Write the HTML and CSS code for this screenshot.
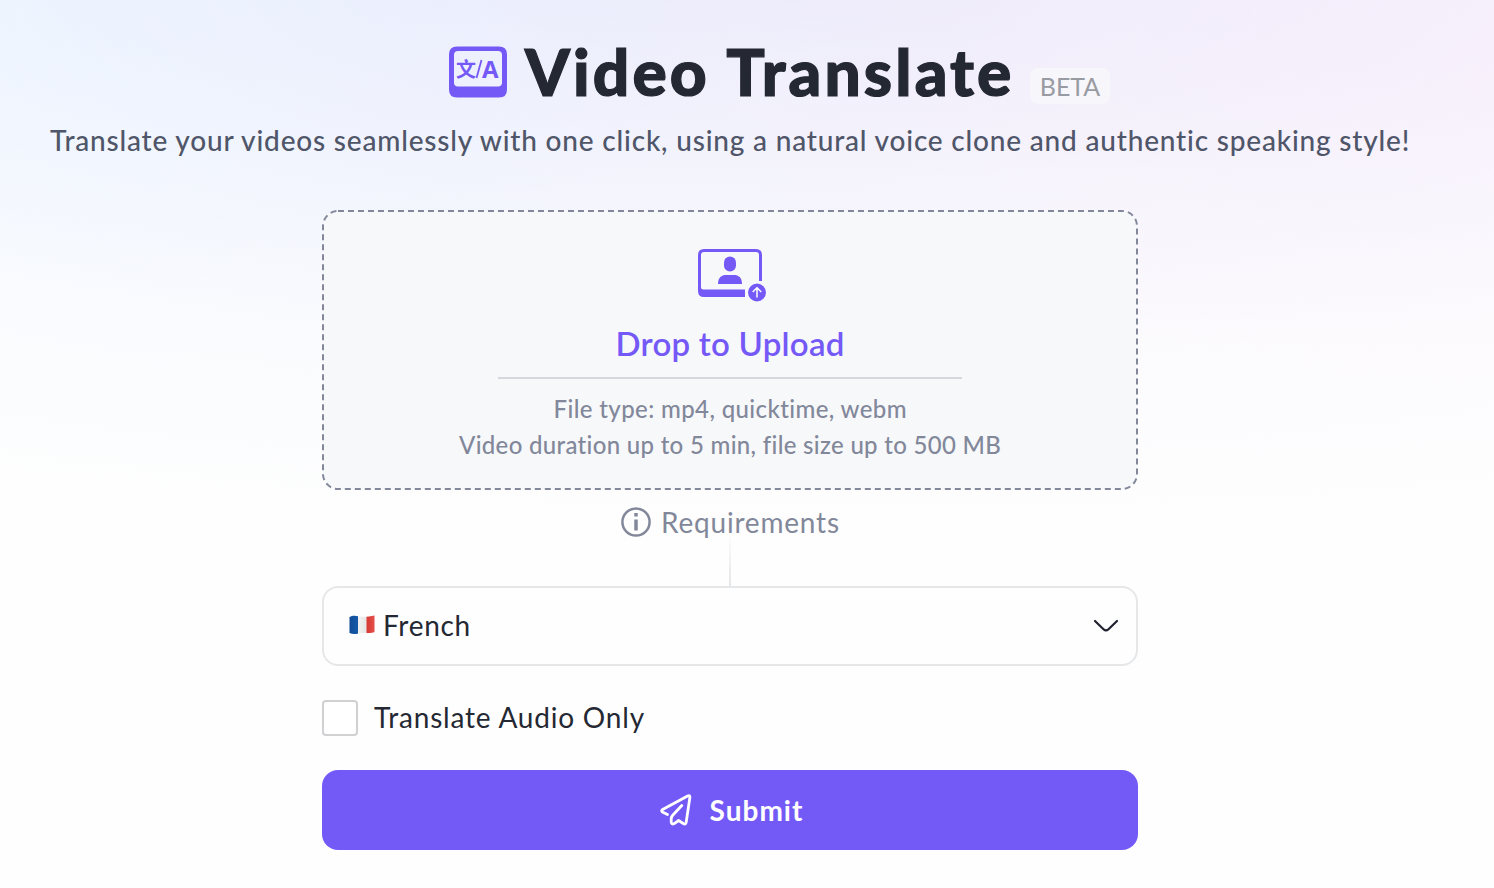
FILE: index.html
```html
<!DOCTYPE html>
<html lang="en">
<head>
<meta charset="utf-8">
<title>Video Translate</title>
<link rel="stylesheet" href="styles.css">
</head>
<body>
<main class="page">
  <header class="hero">
    <div class="hero-title">
      <svg class="hero-icon" width="58" height="52" viewBox="0 0 58 52">
        <path fill="#7559f7" fill-rule="evenodd" d="M8 0.5H50Q58 0.5 58 8.500V43.500Q58 51.500 50 51.500H8Q0 51.500 0 43.500V8.500Q0 0.500 8 0.500ZM9 5Q5 5 5 9V36.500Q5 40.500 9 40.500H49Q53 40.500 53 36.500V9Q53 5 49 5Z"/>
        <g fill="#7559f7">
          <text class="glyph-han" x="7" y="30.500">文</text>
          <text class="glyph-latin" x="33" y="32">A</text>
        </g>
        <path d="M27.500 32 32.500 14" stroke="#7559f7" stroke-width="1.800"/>
      </svg>
      <h1 class="title">Video Translate</h1>
      <span class="badge">BETA</span>
    </div>
    <p class="subtitle">Translate your videos seamlessly with one click, using a natural voice clone and authentic speaking style!</p>
  </header>
  <section class="form">
    <div class="dropzone">
      <svg class="dash" width="816" height="280"><rect x="1" y="1" width="814" height="278" rx="15" fill="#f7f8fa" stroke="#82889a" stroke-width="2" stroke-dasharray="6 4"/></svg>
      <svg class="upload-icon" width="70" height="54" viewBox="0 0 70 54">
        <path fill="#7559f7" fill-rule="evenodd" d="M6 0H58Q64 0 64 6V32H61V6Q61 3 58 3H6Q3 3 3 6V38Q3 40.500 5.500 40.500H47V48H6Q0 48 0 42V6Q0 0 6 0Z"/>
        <rect x="26" y="7.500" width="12" height="15" rx="6" fill="#7559f7"/>
        <path d="M20 35C20 28.500 23.500 26 28 26H36C40.500 26 44 28.500 44 35Z" fill="#7559f7"/>
        <circle cx="59" cy="43.500" r="9" fill="#7559f7"/>
        <path d="M59 48.500V39M54.700 43 59 38.800 63.300 43" fill="none" stroke="#fff" stroke-width="1.500"/>
      </svg>
      <div class="drop-title">Drop to Upload</div>
      <hr class="rule">
      <p class="hint hint-type">File type: mp4, quicktime, webm</p>
      <p class="hint hint-size">Video duration up to 5 min, file size up to 500 MB</p>
    </div>
    <div class="requirements">
      <svg width="30" height="30" viewBox="0 0 30 30"><circle cx="15" cy="15" r="13.600" fill="none" stroke="#82889a" stroke-width="2.500"/><path d="M15 12.500V23.500M15 6V9.500" stroke="#82889a" stroke-width="3.500"/></svg>
      <span class="requirements-label">Requirements</span>
      <i class="connector"></i>
    </div>
    <div class="select">
      <svg class="flag" width="26" height="20" viewBox="0 0 26 20">
        <defs>
          <clipPath id="wave"><path d="M.5 2C5-.4 9 1.500 13 1.800S21 1.500 25.500.5V17C21 19 17 17.500 13 18S5 20 .5 18Z"/></clipPath>
          <linearGradient id="fold"><stop stop-color="#000" stop-opacity=".12"/><stop offset=".3" stop-color="#000" stop-opacity="0"/><stop offset=".65" stop-color="#000" stop-opacity=".06"/><stop offset="1" stop-color="#fff" stop-opacity=".12"/></linearGradient>
        </defs>
        <g clip-path="url(#wave)"><path fill="#1457a8" d="M0 0H9V20H0Z"/><path fill="#f4f4f5" d="M9 0H17.500V20H9Z"/><path fill="#e63d38" d="M17.500 0H26V20H17.500Z"/><path fill="url(#fold)" d="M0 0H26V20H0Z"/></g>
      </svg>
      <span class="select-value">French</span>
      <svg class="chevron" width="26" height="16" viewBox="0 0 26 16"><path d="M2 3 10.500 11.200Q13 13.600 15.500 11.200L24 3" fill="none" stroke="#20222f" stroke-width="2.200" stroke-linecap="round"/></svg>
    </div>
    <label class="check"><span class="box"></span><span class="check-label">Translate Audio Only</span></label>
    <button class="submit">
      <svg width="32" height="32" viewBox="0 0 32 32" fill="none" stroke="#fff" stroke-width="2.800" stroke-linejoin="round" stroke-linecap="round"><path d="M7.500 20.500 2.800 18.200Q.6 16.800 2.600 15.400L27.600 1.900Q30 .8 29.900 3.300L26.200 28.300Q25.600 31 23.300 29.500L18.600 26.500 14.300 29.600Q11.300 31 11.200 27.800V25.200Q11.200 23 12.700 21.300L21.800 11.500"/></svg>
      <span class="submit-label">Submit</span>
    </button>
  </section>
</main>
</body>
</html>
```
FILE: styles.css
```css
* { box-sizing: border-box; }
body {
  margin: 0;
  height: 888px;
  overflow: hidden;
  font-family: Lato, "Noto Sans", sans-serif;
  color: #242833;
  background:
    radial-gradient(ellipse 1900px 590px at 800px -40px, rgba(254, 254, 254, 0), rgba(254, 254, 254, .5) 40%, rgba(254, 254, 254, .85) 70%, #fefefe),
    linear-gradient(90deg, #dce9ff, #ecebfb 50%, #efe9fa 75%, #efe2fa);
}
h1, p { margin: 0; font-weight: inherit; }
svg { flex: none; display: block; }
.page { width: 1460px; display: flex; flex-direction: column; align-items: center; }
.hero { height: 210px; padding-top: 32px; display: flex; flex-direction: column; align-items: center; }
.hero-title { height: 80px; display: flex; align-items: center; padding-left: 99px; }
.hero-icon { margin: -1px 18px 0 0; }
.glyph-han { font: 700 20px "Noto Sans CJK SC", sans-serif; }
.glyph-latin { font: 700 24px "Open Sans", sans-serif; }
.title { font-size: 64px; line-height: 82px; font-weight: 900; white-space: nowrap; width: 488px; letter-spacing: 3.1px; -webkit-text-stroke: 1.2px #242833; }
.badge { width: 80px; height: 36px; margin: 28px 0 0 17px; border-radius: 8px; background: #f6f6fb; color: #999ba2; font-size: 25px; line-height: 37px; text-align: center; }
.subtitle { margin-top: 8px; width: 1360px; font-size: 28px; line-height: 40px; font-weight: 500; color: #505669; white-space: nowrap; letter-spacing: .81px; }
.form { width: 816px; }
.dropzone { position: relative; height: 280px; padding-top: 39px; display: flex; flex-direction: column; align-items: center; }
.dash { position: absolute; inset: 0; }
.upload-icon { position: relative; margin-left: 5px; }
.drop-title { position: relative; margin-top: 20px; height: 40px; width: 229px; white-space: nowrap; font-size: 33px; line-height: 40px; font-weight: 600; color: #7559f7; letter-spacing: .25px; }
.rule { position: relative; width: 464px; height: 2px; margin: 14px 0 12px; border: 0; background: #d5d7dc; }
.hint { position: relative; font-size: 24px; line-height: 36px; color: #82889a; white-space: nowrap; font-weight: 500; }
.hint-type { width: 353px; letter-spacing: .38px; }
.hint-size { width: 542px; letter-spacing: .31px; }
.requirements { position: relative; height: 96px; padding-top: 17px; display: flex; justify-content: center; gap: 10px; color: #82889a; font-size: 28px; line-height: 30px; }
.requirements-label { width: 178px; white-space: nowrap; letter-spacing: .8px; }
.connector { position: absolute; left: 407px; bottom: 0; width: 2px; height: 56px; background: linear-gradient(rgba(229, 230, 232, 0), #e5e6e8); }
.select { height: 80px; border: 2px solid #e6e7e9; border-radius: 16px; background: #fefefe; padding: 0 17px 0 25px; display: flex; align-items: center; font-size: 28px; }
.select-value { margin-top: -2px; letter-spacing: .7px; }
.flag { margin: -2px 8px 0 0; }
.chevron { margin-left: auto; }
.check { margin-top: 34px; height: 36px; display: flex; align-items: center; gap: 16px; font-size: 28px; white-space: nowrap; }
.check-label { margin-top: -2px; letter-spacing: .8px; }
.box { width: 36px; height: 36px; border: 2px solid #d1d1d3; border-radius: 4px; background: #fff; }
.submit { width: 100%; height: 80px; margin-top: 34px; padding: 0 0 0 3px; border: 0; border-radius: 16px; background: #735af7; color: #fff; display: flex; justify-content: center; align-items: center; gap: 18px; font: 700 28px Lato, sans-serif; }
.submit-label { margin-top: -1px; letter-spacing: 1px; }
```
